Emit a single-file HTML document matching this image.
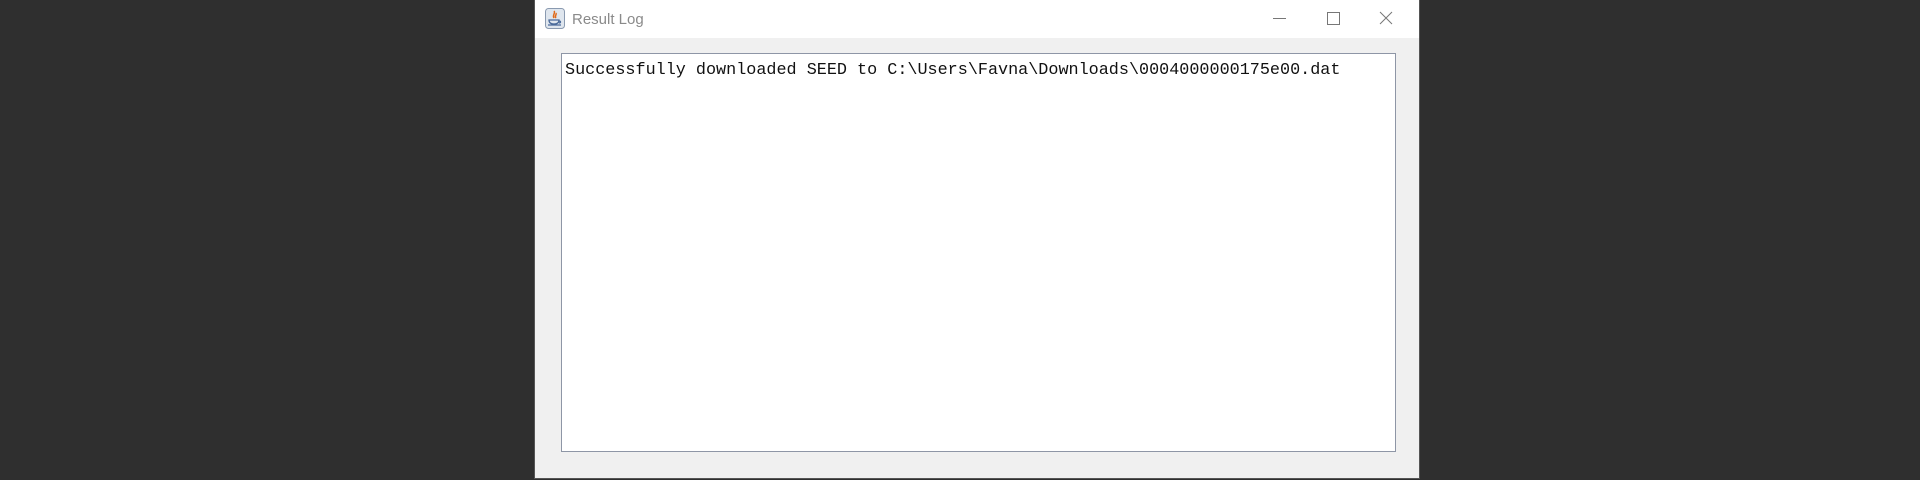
<!DOCTYPE html>
<html><head><style>
html,body{margin:0;padding:0;width:1920px;height:480px;background:#2f2f2f;overflow:hidden;position:relative}
.win{position:absolute;left:534px;top:0;width:886px;height:479px;background:#f0f0f0;border:1px solid #555;border-top:none;box-sizing:border-box}
.tb{position:absolute;left:0;top:0;right:0;height:38px;background:#fff}
.title{position:absolute;left:37px;top:11px;font:15px "Liberation Sans",sans-serif;color:#8a8a8a}
.ta{position:absolute;left:26px;top:53px;width:835px;height:399px;background:#fff;border:1px solid #8e96a6;box-sizing:border-box}
.txt{position:absolute;left:3px;top:7px;font:16.8px "Liberation Mono",monospace;color:#111;white-space:pre}
svg{position:absolute}
</style></head><body>
<div class="win">
<div class="tb">
<svg style="left:10px;top:8px" width="20" height="21" viewBox="0 0 20 21"><rect x="0.5" y="0.5" width="19" height="20" rx="3" fill="#dfe6ee" stroke="#8a9ab0"/><path d="M9 3c2 2-2 4 0 7M11 5c1 2-2 3 0 5" stroke="#e06a1a" stroke-width="1.5" fill="none"/><path d="M4 12h10c0 3-2 4-5 4s-5-1-5-4zM14 13c2 0 2 2 0 2M3 17h13" stroke="#4a6a9a" stroke-width="1.3" fill="none"/></svg>
<div class="title">Result Log</div>
<svg style="left:730px;top:9px" width="150" height="20"><path d="M8 9.5h13" stroke="#777" stroke-width="1"/><rect x="62.5" y="3.5" width="12" height="12" fill="none" stroke="#777"/><path d="M115 3l12 12M127 3l-12 12" stroke="#777" stroke-width="1"/></svg>
</div>
<div class="ta"><div class="txt">Successfully downloaded SEED to C:\Users\Favna\Downloads\0004000000175e00.dat</div></div>
</div>
</body></html>
